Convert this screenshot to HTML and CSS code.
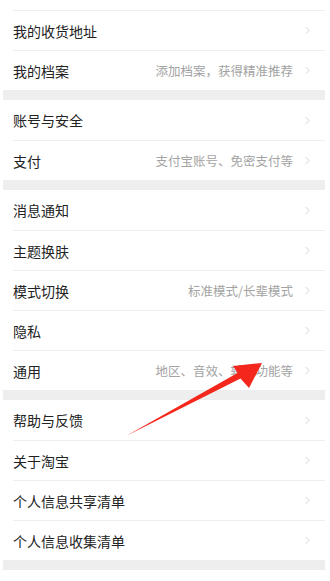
FILE: index.html
```html
<html>
  <head>
    <title>设置</title>
    <link rel="stylesheet" href="styles.css">
  </head>
  <body>
    <div class="settings">
      <div class="group first">
        <div class="row top-line"><div class="row-inner"><span class="label">我的收货地址</span><span class="chev"><svg viewBox="0 0 6 10"><polyline points="1,1 5,5 1,9"/></svg></span></div></div>
        <div class="row"><div class="row-inner"><span class="label">我的档案</span><span class="value">添加档案，获得精准推荐</span><span class="chev"><svg viewBox="0 0 6 10"><polyline points="1,1 5,5 1,9"/></svg></span></div></div>
      </div>
      <div class="gap"></div>
      <div class="group">
        <div class="row"><div class="row-inner"><span class="label">账号与安全</span><span class="chev"><svg viewBox="0 0 6 10"><polyline points="1,1 5,5 1,9"/></svg></span></div></div>
        <div class="row"><div class="row-inner"><span class="label">支付</span><span class="value">支付宝账号、免密支付等</span><span class="chev"><svg viewBox="0 0 6 10"><polyline points="1,1 5,5 1,9"/></svg></span></div></div>
      </div>
      <div class="gap"></div>
      <div class="group">
        <div class="row"><div class="row-inner"><span class="label">消息通知</span><span class="chev"><svg viewBox="0 0 6 10"><polyline points="1,1 5,5 1,9"/></svg></span></div></div>
        <div class="row"><div class="row-inner"><span class="label">主题换肤</span><span class="chev"><svg viewBox="0 0 6 10"><polyline points="1,1 5,5 1,9"/></svg></span></div></div>
        <div class="row"><div class="row-inner"><span class="label">模式切换</span><span class="value">标准模式/长辈模式</span><span class="chev"><svg viewBox="0 0 6 10"><polyline points="1,1 5,5 1,9"/></svg></span></div></div>
        <div class="row"><div class="row-inner"><span class="label">隐私</span><span class="chev"><svg viewBox="0 0 6 10"><polyline points="1,1 5,5 1,9"/></svg></span></div></div>
        <div class="row"><div class="row-inner"><span class="label">通用</span><span class="value">地区、音效、辅助功能等</span><span class="chev"><svg viewBox="0 0 6 10"><polyline points="1,1 5,5 1,9"/></svg></span></div></div>
      </div>
      <div class="gap"></div>
      <div class="group">
        <div class="row"><div class="row-inner"><span class="label">帮助与反馈</span><span class="chev"><svg viewBox="0 0 6 10"><polyline points="1,1 5,5 1,9"/></svg></span></div></div>
        <div class="row"><div class="row-inner"><span class="label">关于淘宝</span><span class="chev"><svg viewBox="0 0 6 10"><polyline points="1,1 5,5 1,9"/></svg></span></div></div>
        <div class="row"><div class="row-inner"><span class="label">个人信息共享清单</span><span class="chev"><svg viewBox="0 0 6 10"><polyline points="1,1 5,5 1,9"/></svg></span></div></div>
        <div class="row"><div class="row-inner"><span class="label">个人信息收集清单</span><span class="chev"><svg viewBox="0 0 6 10"><polyline points="1,1 5,5 1,9"/></svg></span></div></div>
      </div>
      <div class="gap"></div>
    </div>
    <!-- red annotation arrow drawn over the list -->
    <svg class="arrow" viewBox="0 0 330 581">
      <polygon points="126,436 237.5,373 233,366 262,363 249,388 240.5,378.5"/>
    </svg>
  </body>
</html>
```

FILE: styles.css
```css
body {
  margin: 0;
  background-color: #ffffff;
  font-family: "Noto Sans CJK SC", "Noto Sans", sans-serif;
  color: #222222;
}
.settings {
  margin: 0 5px 0 3px;
  background-color: #ffffff;
}
.group.first {
  padding-top: 10px;
}
.gap {
  height: 10px;
  background-color: #eeeeee;
}
.row {
  padding-left: 10px;
}
.row-inner {
  display: flex;
  align-items: center;
  height: 40px;
  box-sizing: border-box;
  padding-right: 15px;
}
.row + .row .row-inner,
.row.top-line .row-inner {
  border-top: 1px solid #eeeeee;
}
.label {
  flex: 1;
  font-size: 14px;
  line-height: 20px;
}
.value {
  font-size: 12.5px;
  color: #a3a3a3;
  margin-right: 12px;
}
.chev {
  display: flex;
  width: 5px;
  height: 9px;
}
.chev svg {
  width: 5px;
  height: 9px;
  overflow: visible;
}
.chev polyline {
  fill: none;
  stroke: #c4c4c4;
  stroke-width: 0.9;
}
.arrow {
  position: absolute;
  left: 0;
  top: 0;
  width: 330px;
  height: 581px;
  pointer-events: none;
}
.arrow polygon {
  fill: #f4271c;
}
```
